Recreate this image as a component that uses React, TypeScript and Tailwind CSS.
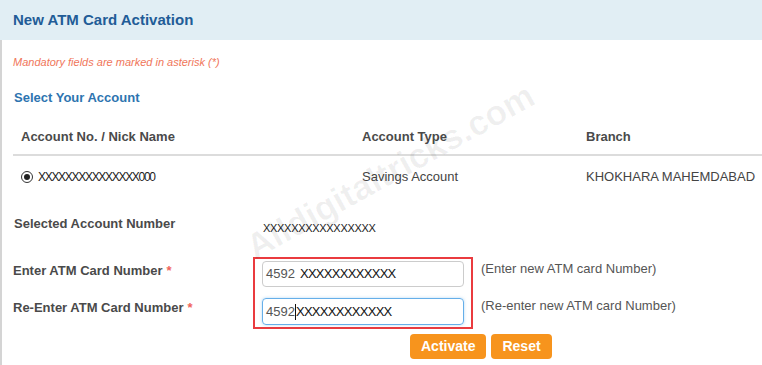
import React from "react";

const font = { fontFamily: '"Liberation Sans", Arial, sans-serif' };

const Star = () => <span className="ml-1 align-top text-[13px] text-[#f0645a]">*</span>;

export default function App() {
  return (
    <div className="relative h-[365px] w-[762px] overflow-hidden bg-white" style={font}>
      <div className="flex h-[40px] items-center bg-[#e1eef4] pl-[13px]">
        <h1 className="text-[15px] font-bold text-[#215c97]">New ATM Card Activation</h1>
      </div>

      <div className="h-[325px] border-l-2 border-[#d4d4d4] pl-[11px]">
        <p className="pt-[14px] text-[11px] leading-[16px] text-[#f0765a] italic">
          Mandatory fields are marked in asterisk (*)
        </p>
        <h2 className="mt-[19px] pl-px text-[13px] leading-[18px] font-bold text-[#2d74b0]">Select Your Account</h2>

        <div className="mt-[12px]">
          <div className="grid h-[37px] grid-cols-[341px_224px_1fr] items-center border-b-2 border-[#dcdcdc] pl-2 text-[13px] font-bold text-[#4a4a4a]">
            <span>Account No. / Nick Name</span>
            <span>Account Type</span>
            <span>Branch</span>
          </div>
          <div className="grid h-[42px] grid-cols-[341px_224px_1fr] items-center pl-2 text-[13px] text-[#444]">
            <label className="flex items-center gap-[5px]">
              <span className="flex h-[12px] w-[12px] items-center justify-center rounded-full border border-[#333] bg-white">
                <span className="h-[6px] w-[6px] rounded-full bg-[#222]" />
              </span>
              <span className="text-[12px] tracking-[-1.3px] text-[#222]">XXXXXXXXXXXXXXX000</span>
            </label>
            <span>Savings Account</span>
            <span className="whitespace-nowrap">KHOKHARA MAHEMDABAD</span>
          </div>
        </div>

        <div className="mt-[12px] flex h-[28px] items-center">
          <span className="w-[250px] pl-[1px] text-[13px] font-bold text-[#4a4a4a]">Selected Account Number</span>
          <span className="mt-[8px] text-[11px] tracking-[-0.3px] text-[#222]">XXXXXXXXXXXXXXXX</span>
        </div>

        <div className="mt-[19px] flex items-start">
          <div className="flex w-[240px] flex-col pt-[1px] text-[13px] font-bold text-[#4a4a4a]">
            <div className="flex h-[26px] items-center">
              Enter ATM Card Number
              <Star />
            </div>
            <div className="mt-[11px] flex h-[26px] items-center">
              Re-Enter ATM Card Number
              <Star />
            </div>
          </div>
          <div className="flex w-[220px] flex-col gap-[11px] border-2 border-[#ea3b3f] px-[7px] py-[2px]">
            <div className="flex h-[26px] items-center rounded-[4px] border border-[#cccccc] px-[3px] text-[13px]">
              <span className="text-[#555]">4592</span>
              <span className="ml-[5px] tracking-[-0.7px] text-[#111]">XXXXXXXXXXXX</span>
            </div>
            <div className="flex h-[27px] items-center rounded-[4px] border border-[#66afe9] px-[3px] text-[13px] shadow-[0_0_3px_rgba(102,175,233,0.5)]">
              <span className="text-[#555]">4592</span>
              <span className="h-[16px] w-px bg-[#111]" />
              <span className="tracking-[-0.7px] text-[#111]">XXXXXXXXXXXX</span>
            </div>
          </div>
          <div className="-mt-[1px] flex flex-col pl-[8px] text-[13px] text-[#555]">
            <div className="flex h-[26px] items-center">(Enter new ATM card Number)</div>
            <div className="mt-[11px] flex h-[26px] items-center">(Re-enter new ATM card Number)</div>
          </div>
        </div>

        <div className="mt-[5px] flex gap-[5px] pl-[397px]">
          <button className="h-[25px] rounded-[4px] bg-[#f7941d] px-[11px] text-[14px] font-bold text-white">Activate</button>
          <button className="h-[25px] rounded-[4px] bg-[#f7941d] px-[11px] text-[14px] font-bold text-white">Reset</button>
        </div>
      </div>

      <div className="pointer-events-none absolute top-[145px] left-[229px] -rotate-[29deg] text-[35px] font-bold whitespace-nowrap text-black/[0.06]">
        Alldigitaltricks.com
      </div>
    </div>
  );
}
